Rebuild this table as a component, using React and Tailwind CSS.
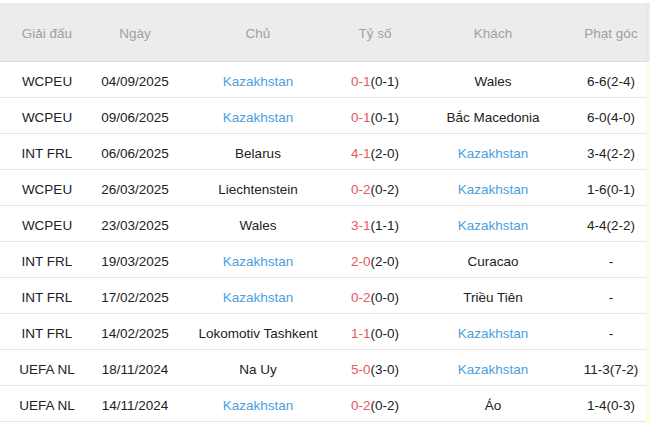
import React from "react";

const rows = [
  ["WCPEU", "04/09/2025", "Kazakhstan", true, "0-1", "(0-1)", "Wales", false, "6-6(2-4)"],
  ["WCPEU", "09/06/2025", "Kazakhstan", true, "0-1", "(0-1)", "Bắc Macedonia", false, "6-0(4-0)"],
  ["INT FRL", "06/06/2025", "Belarus", false, "4-1", "(2-0)", "Kazakhstan", true, "3-4(2-2)"],
  ["WCPEU", "26/03/2025", "Liechtenstein", false, "0-2", "(0-2)", "Kazakhstan", true, "1-6(0-1)"],
  ["WCPEU", "23/03/2025", "Wales", false, "3-1", "(1-1)", "Kazakhstan", true, "4-4(2-2)"],
  ["INT FRL", "19/03/2025", "Kazakhstan", true, "2-0", "(2-0)", "Curacao", false, "-"],
  ["INT FRL", "17/02/2025", "Kazakhstan", true, "0-2", "(0-0)", "Triều Tiên", false, "-"],
  ["INT FRL", "14/02/2025", "Lokomotiv Tashkent", false, "1-1", "(0-0)", "Kazakhstan", true, "-"],
  ["UEFA NL", "18/11/2024", "Na Uy", false, "5-0", "(3-0)", "Kazakhstan", true, "11-3(7-2)"],
  ["UEFA NL", "14/11/2024", "Kazakhstan", true, "0-2", "(0-2)", "Áo", false, "1-4(0-3)"],
];

const cols = "grid grid-cols-[94px_82px_164px_70px_166px_70px]";

export default function App() {
  return (
    <div className="w-[650px] h-[433px] bg-white pt-[3px] text-[13.5px] text-[#222]" style={{ fontFamily: '"Liberation Sans", Arial, sans-serif' }}>
      <div className="flex">
        <div className="w-[646px]">
          <div className={`${cols} h-[59px] pt-[5px] items-center bg-[#ececec] border-b border-[#dcdcdc] text-[#a0a0a0]`}>
            <div className="text-center">Giải đấu</div>
            <div className="text-center">Ngày</div>
            <div className="text-center">Chủ</div>
            <div className="text-center">Tỷ số</div>
            <div className="text-center">Khách</div>
            <div className="text-center">Phạt góc</div>
          </div>
          {rows.map((r, i) => (
            <div key={i} className={`${cols} h-[36px] pt-[6px] items-center border-b border-[#e6e6e6]`}>
              <div className="text-center">{r[0]}</div>
              <div className="text-center">{r[1]}</div>
              <div className={`text-center ${r[3] ? "text-[#4b9fe0]" : ""}`}>{r[2]}</div>
              <div className="text-center whitespace-nowrap">
                <span className="text-[#e8595b]">{r[4]}</span>
                {r[5]}
              </div>
              <div className={`text-center ${r[7] ? "text-[#4b9fe0]" : ""}`}>{r[6]}</div>
              <div className="text-center whitespace-nowrap">{r[8]}</div>
            </div>
          ))}
        </div>
        <div className="w-[4px] flex flex-col">
          <div className="h-[59px] bg-[#ececec] border-l border-[#e2e2e2]"></div>
          <div className="h-[360px] bg-[#fffbe3]"></div>
        </div>
      </div>
    </div>
  );
}
